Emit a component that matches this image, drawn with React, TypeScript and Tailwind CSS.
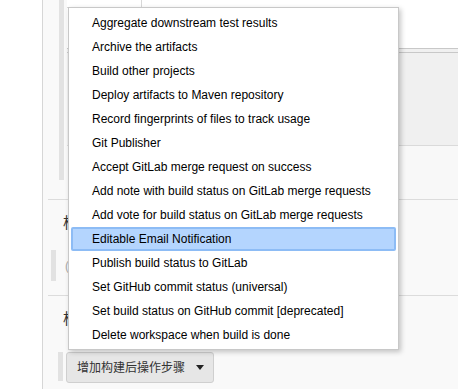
import React from 'react';

const items = [
  'Aggregate downstream test results',
  'Archive the artifacts',
  'Build other projects',
  'Deploy artifacts to Maven repository',
  'Record fingerprints of files to track usage',
  'Git Publisher',
  'Accept GitLab merge request on success',
  'Add note with build status on GitLab merge requests',
  'Add vote for build status on GitLab merge requests',
  'Editable Email Notification',
  'Publish build status to GitLab',
  'Set GitHub commit status (universal)',
  'Set build status on GitHub commit [deprecated]',
  'Delete workspace when build is done',
];

export default function App() {
  const active = 'Editable Email Notification';

  return (
    <div className="relative w-[458px] h-[389px] overflow-hidden bg-white flex font-['Liberation_Sans','Noto_Sans_CJK_SC',sans-serif] text-[12px]">
      <div className="w-[43px] shrink-0 bg-white border-r border-[#d6d6d6]" />

      <div className="flex-1 flex flex-col bg-[#f9f9f9]">
        {/* first step */}
        <div className="h-[200px] flex border-b border-[#dcdcdc] ml-[5px]">
          <div className="w-[11px]" />
          <div className="w-[5px] h-[180px] bg-[#e2e2e2]" />
          <div className="w-[3px]" />
          <div className="flex-1 flex flex-col">
            <div className="h-[48px] bg-white">
              <div className="w-[75px] h-[8px] bg-white border-r border-b border-[#d8d8d8]" />
            </div>
            <div className="h-[5px] border-t border-b border-[#c8c8c8] bg-[#f0f0f0]" />
            <div className="h-[93px] bg-[#f0f0f0] border-b border-[#dadada]" />
            <div className="flex-1 bg-[#f8f8f8]" />
          </div>
        </div>

        {/* second step */}
        <div className="h-[96px] border-b border-[#dcdcdc] ml-[5px]">
          <div className="pl-[15px] pt-[13px] text-[15px] leading-[20px] text-[#333]">构</div>
          <div className="flex items-center mt-[17px]">
            <div className="w-[3px]" />
            <div className="w-[5px] h-[31px] bg-[#e2e2e2]" />
            <div className="pl-[9px] text-[#aaa] text-[12px]">(</div>
          </div>
        </div>

        {/* third step */}
        <div className="flex-1 ml-[5px]">
          <div className="pl-[15px] pt-[13px] text-[15px] leading-[20px] text-[#333]">构</div>
          <div className="flex items-start mt-[23px]">
            <div className="w-[10px]" />
            <div className="w-[5px] h-[29px] bg-[#e2e2e2]" />
            <div className="w-[3px]" />
            <button className="h-[31px] pl-[10px] pr-[9px] flex items-center gap-[11px] rounded-[3px] border border-[#cfcfcf] bg-[#e6e6e6] text-[#333] text-[12px]">
              <span>增加构建后操作步骤</span>
              <svg width="8" height="5" viewBox="0 0 8 5">
                <path d="M0 0h8L4 5z" fill="#222" />
              </svg>
            </button>
          </div>
        </div>
      </div>

      {/* dropdown menu */}
      <div className="absolute left-[68px] top-[7px] w-[331px] bg-white border border-[#c8c8c8] shadow-[2px_2px_5px_rgba(0,0,0,0.22)] pt-[3px] pb-[2px] px-[2px]">
        {items.map((label) => (
          <div
            key={label}
            className={
              label === active
                ? 'h-[24px] flex items-center pl-[19px] text-black bg-[#b4d5fe] border-2 border-[#8dbcf5] rounded-[2px]'
                : 'h-[24px] flex items-center pl-[19px] text-black border-2 border-transparent'
            }
          >
            {label}
          </div>
        ))}
      </div>
    </div>
  );
}
